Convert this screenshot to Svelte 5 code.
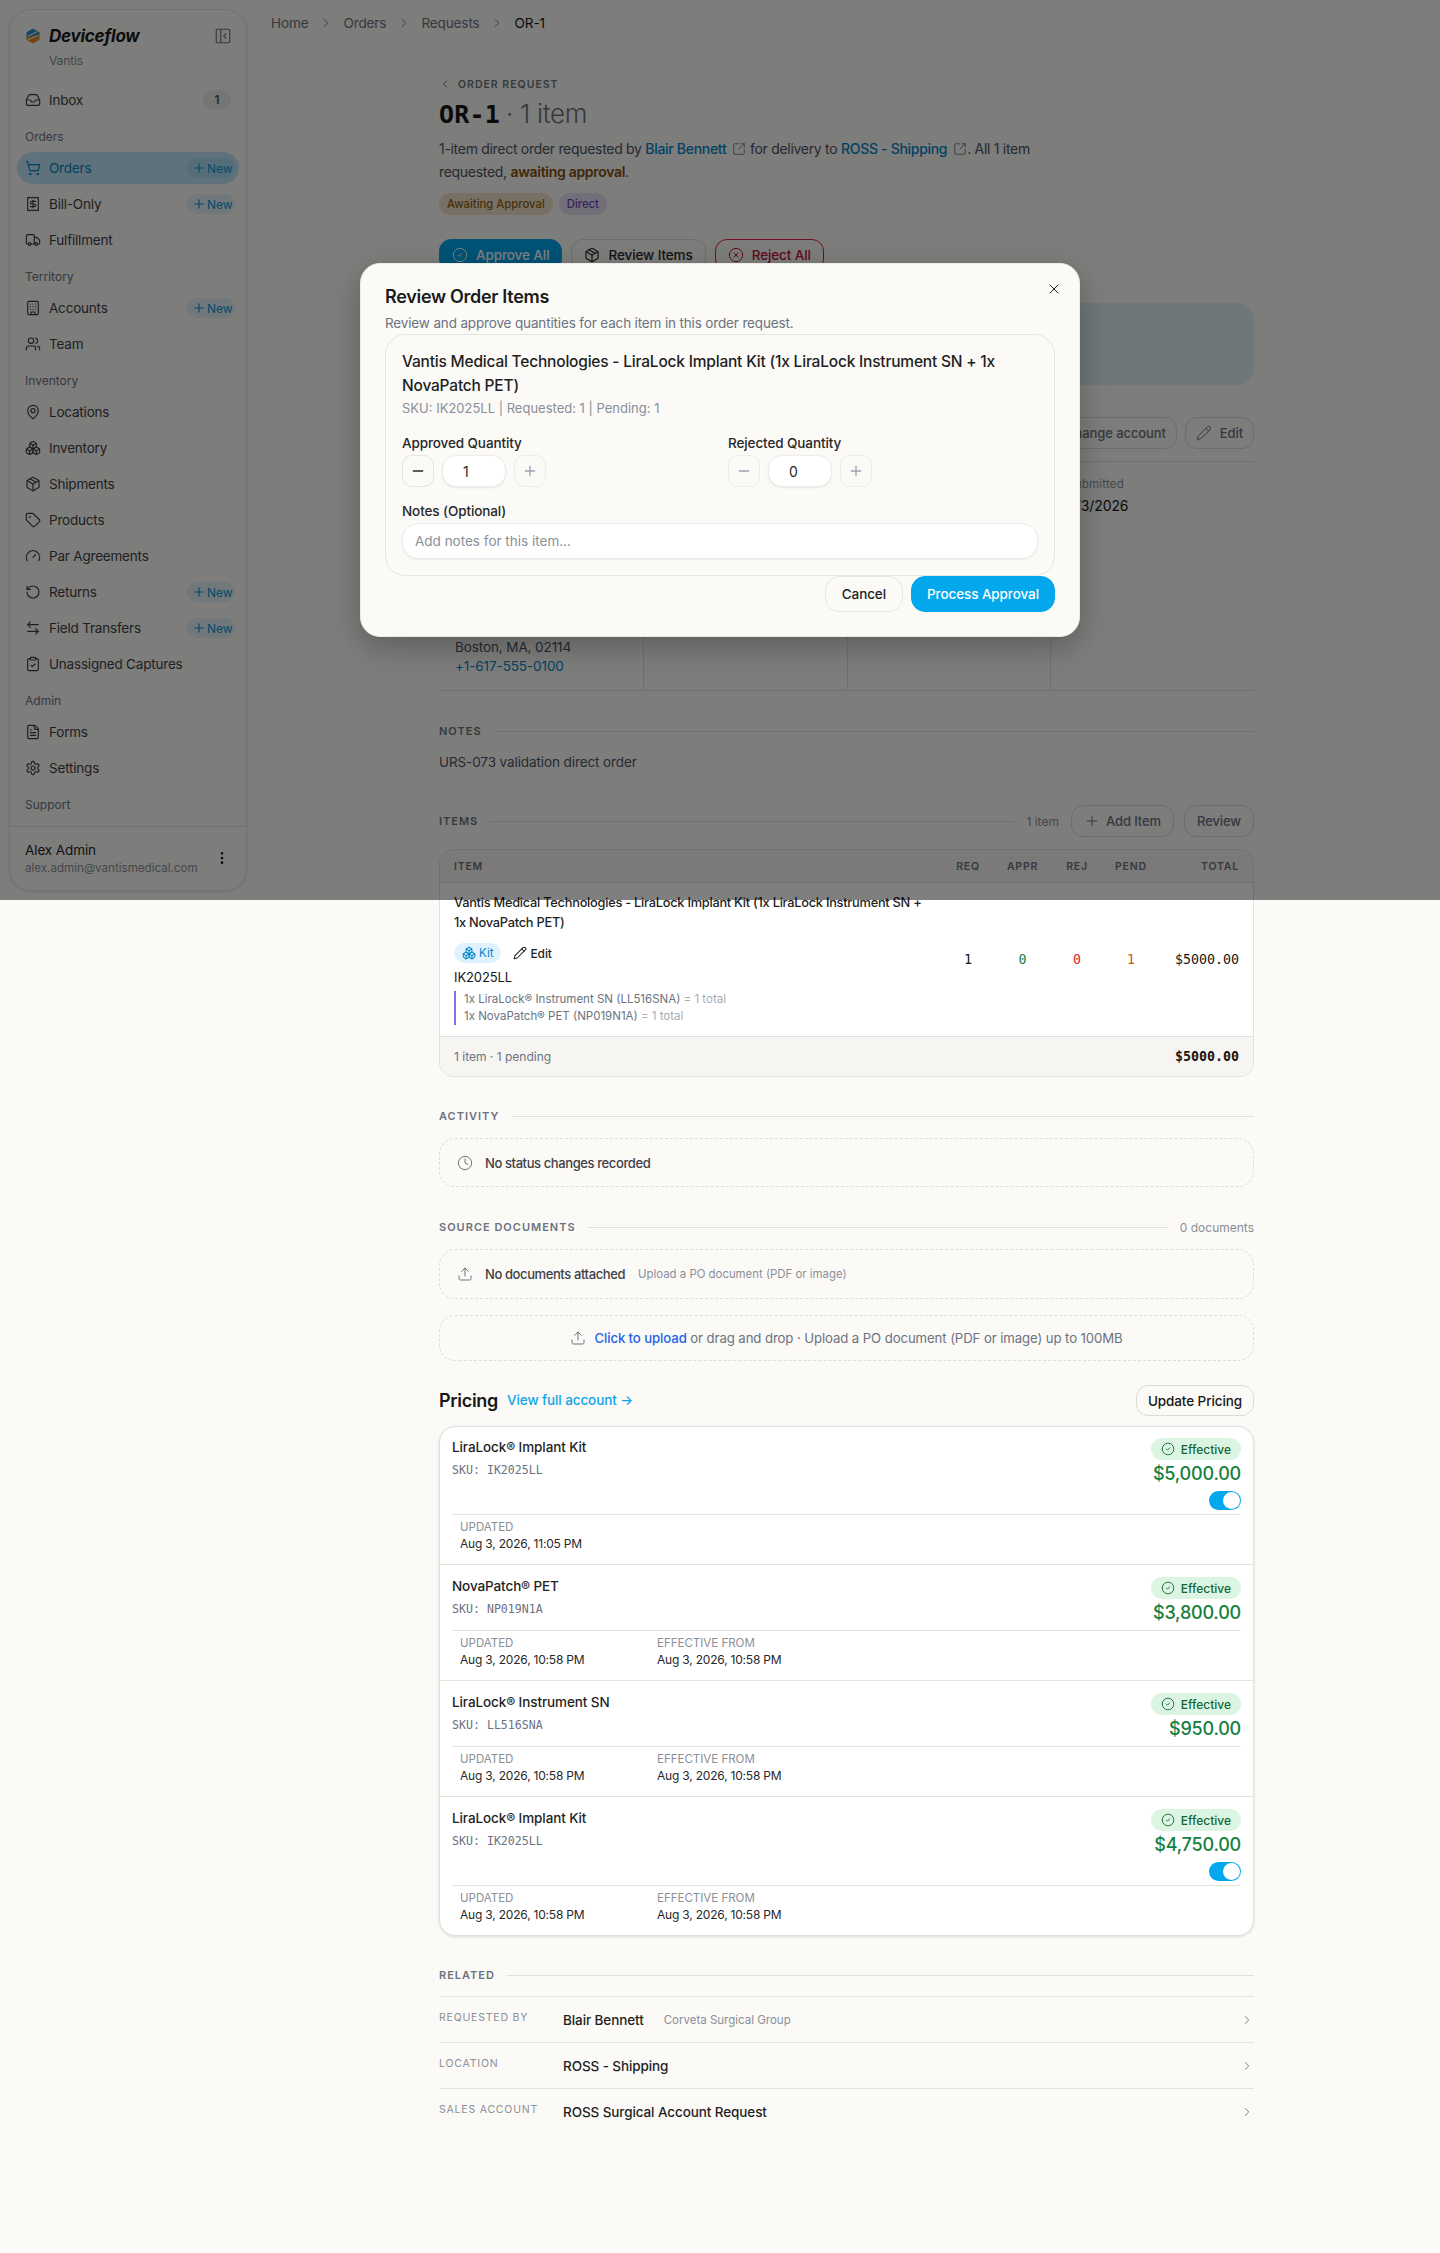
<script>
  const c = (x, y, r) => `M${x - r} ${y}a${r} ${r} 0 1 0 ${2 * r} 0a${r} ${r} 0 1 0 ${-2 * r} 0`;
  const rr = (x, y, w, h, r) =>
    `M${x + r} ${y}h${w - 2 * r}a${r} ${r} 0 0 1 ${r} ${r}v${h - 2 * r}a${r} ${r} 0 0 1 ${-r} ${r}h${-(w - 2 * r)}a${r} ${r} 0 0 1 ${-r} ${-r}v${-(h - 2 * r)}a${r} ${r} 0 0 1 ${r} ${-r}z`;

  const ICONS = {
    inbox: ['M22 12h-6l-2 3h-4l-2-3H2', 'M5.45 5.11 2 12v6a2 2 0 0 0 2 2h16a2 2 0 0 0 2-2v-6l-3.45-6.89A2 2 0 0 0 16.76 4H7.24a2 2 0 0 0-1.79 1.11z'],
    cart: [c(8, 21, 1), c(19, 21, 1), 'M2.05 2.05h2l2.66 12.42a2 2 0 0 0 2 1.58h9.78a2 2 0 0 0 1.95-1.57l1.65-7.43H5.12'],
    receipt: ['M4 2v20l2-1 2 1 2-1 2 1 2-1 2 1 2-1 2 1V2l-2 1-2-1-2 1-2-1-2 1-2-1-2 1Z', 'M16 8h-6a2 2 0 1 0 0 4h4a2 2 0 1 1 0 4H8', 'M12 17.5v-11'],
    truck: ['M14 18V6a2 2 0 0 0-2-2H4a2 2 0 0 0-2 2v11a1 1 0 0 0 1 1h2', 'M15 18H9', 'M19 18h2a1 1 0 0 0 1-1v-3.65a1 1 0 0 0-.22-.624l-3.48-4.35A1 1 0 0 0 17.52 8H14', c(17, 18, 2), c(7, 18, 2)],
    building: [rr(4, 2, 16, 20, 2), 'M9 22v-4h6v4', 'M8 6h.01', 'M16 6h.01', 'M12 6h.01', 'M12 10h.01', 'M12 14h.01', 'M16 10h.01', 'M16 14h.01', 'M8 10h.01', 'M8 14h.01'],
    users: ['M16 21v-2a4 4 0 0 0-4-4H6a4 4 0 0 0-4 4v2', c(9, 7, 4), 'M22 21v-2a4 4 0 0 0-3-3.87', 'M16 3.13a4 4 0 0 1 0 7.75'],
    pin: ['M20 10c0 6-8 12-8 12s-8-6-8-12a8 8 0 0 1 16 0Z', c(12, 10, 3)],
    boxes: ['M2.97 12.92A2 2 0 0 0 2 14.63v3.24a2 2 0 0 0 .97 1.71l3 1.8a2 2 0 0 0 2.06 0L12 19v-5.5l-5-3-4.03 2.42Z', 'm7 16.5-4.74-2.85', 'm7 16.5 5-3', 'M7 16.5v5.17', 'M12 13.5V19l3.97 2.38a2 2 0 0 0 2.06 0l3-1.8a2 2 0 0 0 .97-1.71v-3.24a2 2 0 0 0-.97-1.71L17 10.5l-5 3Z', 'm17 16.5-5-3', 'm17 16.5 4.74-2.85', 'M17 16.5v5.17', 'M7.97 4.42A2 2 0 0 0 7 6.13v4.37l5 3 5-3V6.13a2 2 0 0 0-.97-1.71l-3-1.8a2 2 0 0 0-2.06 0l-3 1.8Z', 'M12 8 7.26 5.15', 'm12 8 4.74-2.85', 'M12 13.5V8'],
    package: ['m7.5 4.27 9 5.15', 'M21 8a2 2 0 0 0-1-1.73l-7-4a2 2 0 0 0-2 0l-7 4A2 2 0 0 0 3 8v8a2 2 0 0 0 1 1.73l7 4a2 2 0 0 0 2 0l7-4A2 2 0 0 0 21 16Z', 'm3.3 7 8.7 5 8.7-5', 'M12 22V12'],
    tag: ['M12.586 2.586A2 2 0 0 0 11.172 2H4a2 2 0 0 0-2 2v7.172a2 2 0 0 0 .586 1.414l8.704 8.704a2.426 2.426 0 0 0 3.42 0l6.58-6.58a2.426 2.426 0 0 0 0-3.42z', c(7.5, 7.5, 0.5)],
    gauge: ['m12 14 4-4', 'M3.34 19a10 10 0 1 1 17.32 0'],
    rotate: ['M3 12a9 9 0 1 0 9-9 9.75 9.75 0 0 0-6.74 2.74L3 8', 'M3 3v5h5'],
    swap: ['M8 3 4 7l4 4', 'M4 7h16', 'm16 21 4-4-4-4', 'M20 17H4'],
    clipboard: [rr(8, 2, 8, 4, 1), 'M16 4h2a2 2 0 0 1 2 2v14a2 2 0 0 1-2 2H6a2 2 0 0 1-2-2V6a2 2 0 0 1 2-2h2', 'm9 14 2 2 4-4'],
    file: ['M15 2H6a2 2 0 0 0-2 2v16a2 2 0 0 0 2 2h12a2 2 0 0 0 2-2V7Z', 'M14 2v4a2 2 0 0 0 2 2h4', 'M10 9H8', 'M16 13H8', 'M16 17H8'],
    settings: ['M12.22 2h-.44a2 2 0 0 0-2 2v.18a2 2 0 0 1-1 1.73l-.43.25a2 2 0 0 1-2 0l-.15-.08a2 2 0 0 0-2.73.73l-.22.38a2 2 0 0 0 .73 2.73l.15.1a2 2 0 0 1 1 1.72v.51a2 2 0 0 1-1 1.74l-.15.09a2 2 0 0 0-.73 2.73l.22.38a2 2 0 0 0 2.73.73l.15-.08a2 2 0 0 1 2 0l.43.25a2 2 0 0 1 1 1.73V20a2 2 0 0 0 2 2h.44a2 2 0 0 0 2-2v-.18a2 2 0 0 1 1-1.73l.43-.25a2 2 0 0 1 2 0l.15.08a2 2 0 0 0 2.73-.73l.22-.39a2 2 0 0 0-.73-2.73l-.15-.08a2 2 0 0 1-1-1.74v-.5a2 2 0 0 1 1-1.74l.15-.09a2 2 0 0 0 .73-2.73l-.22-.38a2 2 0 0 0-2.73-.73l-.15.08a2 2 0 0 1-2 0l-.43-.25a2 2 0 0 1-1-1.73V4a2 2 0 0 0-2-2z', c(12, 12, 3)],
    panel: [rr(3, 3, 18, 18, 2), 'M9 3v18', 'm16 15-3-3 3-3'],
    plus: ['M5 12h14', 'M12 5v14'],
    minus: ['M5 12h14'],
    x: ['M18 6 6 18', 'm6 6 12 12'],
    right: ['m9 18 6-6-6-6'],
    left: ['m15 18-6-6 6-6'],
    ext: ['M21 13v6a2 2 0 0 1-2 2H5a2 2 0 0 1-2-2V5a2 2 0 0 1 2-2h6', 'm21 3-9 9', 'M15 3h6v6'],
    check: [c(12, 12, 10), 'm9 12 2 2 4-4'],
    xcircle: [c(12, 12, 10), 'm15 9-6 6', 'm9 9 6 6'],
    pencil: ['M21.174 6.812a1 1 0 0 0-3.986-3.987L3.842 16.174a2 2 0 0 0-.5.83l-1.321 4.352a.5.5 0 0 0 .623.622l4.353-1.32a2 2 0 0 0 .83-.497z', 'm15 5 4 4'],
    clock: [c(12, 12, 10), 'M12 6v6l4 2'],
    upload: ['M21 15v4a2 2 0 0 1-2 2H5a2 2 0 0 1-2-2v-4', 'M17 8l-5-5-5 5', 'M12 3v12'],
    kebab: [c(12, 5, 1), c(12, 12, 1), c(12, 19, 1)]
  };

  const nav = [
    { items: [{ label: 'Inbox', icon: 'inbox', badge: '1' }] },
    { title: 'Orders', items: [
      { label: 'Orders', icon: 'cart', isNew: true, active: true },
      { label: 'Bill-Only', icon: 'receipt', isNew: true },
      { label: 'Fulfillment', icon: 'truck' }
    ] },
    { title: 'Territory', items: [
      { label: 'Accounts', icon: 'building', isNew: true },
      { label: 'Team', icon: 'users' }
    ] },
    { title: 'Inventory', items: [
      { label: 'Locations', icon: 'pin' },
      { label: 'Inventory', icon: 'boxes' },
      { label: 'Shipments', icon: 'package' },
      { label: 'Products', icon: 'tag' },
      { label: 'Par Agreements', icon: 'gauge' },
      { label: 'Returns', icon: 'rotate', isNew: true },
      { label: 'Field Transfers', icon: 'swap', isNew: true },
      { label: 'Unassigned Captures', icon: 'clipboard' }
    ] },
    { title: 'Admin', items: [
      { label: 'Forms', icon: 'file' },
      { label: 'Settings', icon: 'settings' }
    ] },
    { title: 'Support', items: [] }
  ];

  const prices = [
    { name: 'LiraLock® Implant Kit', sku: 'IK2025LL', price: '$5,000.00', toggle: true, updated: 'Aug 3, 2026, 11:05 PM' },
    { name: 'NovaPatch® PET', sku: 'NP019N1A', price: '$3,800.00', updated: 'Aug 3, 2026, 10:58 PM', from: 'Aug 3, 2026, 10:58 PM' },
    { name: 'LiraLock® Instrument SN', sku: 'LL516SNA', price: '$950.00', updated: 'Aug 3, 2026, 10:58 PM', from: 'Aug 3, 2026, 10:58 PM' },
    { name: 'LiraLock® Implant Kit', sku: 'IK2025LL', price: '$4,750.00', toggle: true, updated: 'Aug 3, 2026, 10:58 PM', from: 'Aug 3, 2026, 10:58 PM' }
  ];

  const related = [
    { label: 'REQUESTED BY', value: 'Blair Bennett', sub: 'Corveta Surgical Group' },
    { label: 'LOCATION', value: 'ROSS - Shipping' },
    { label: 'SALES ACCOUNT', value: 'ROSS Surgical Account Request' }
  ];
</script>

{#snippet icon(name, size = 16, sw = 2)}
  <svg class="ic" width={size} height={size} viewBox="0 0 24 24" fill="none" stroke="currentColor" stroke-width={sw} stroke-linecap="round" stroke-linejoin="round" aria-hidden="true">
    {#each ICONS[name] as d}<path {d} />{/each}
  </svg>
{/snippet}

{#snippet rule(label, extra)}
  <div class="rule">
    <span class="rule-label">{label}</span>
    <span class="rule-line"></span>
    {#if extra}<span class="rule-extra">{extra}</span>{/if}
  </div>
{/snippet}

<div class="page">
  <aside class="side">
    <div class="brand">
      <div class="brand-row">
        <svg class="logo" width="16" height="16" viewBox="0 0 16 16" aria-hidden="true">
          <path d="M8 .5 14.5 4.2v3.2L1.5 10V4.2Z" fill="#2f8fc4" />
          <path d="M14.5 6.6v5.2L8 15.5 1.5 11.8V9.6Z" fill="#e08a1e" />
          <path d="M2.5 8.4 12.5 3.6M3 11.8 13.5 7.2" stroke="#fbfaf7" stroke-width="1" fill="none" />
        </svg>
        <span class="brand-name">Deviceflow</span>
        <span class="collapse">{@render icon('panel', 18, 1.5)}</span>
      </div>
      <div class="brand-sub">Vantis</div>
    </div>

    <nav class="nav">
      {#each nav as group}
        {#if group.title}<div class="nav-title">{group.title}</div>{/if}
        {#each group.items as item}
          <div class="nav-item" class:active={item.active}>
            {@render icon(item.icon, 16, 1.75)}
            <span class="nav-label">{item.label}</span>
            {#if item.badge}<span class="nav-badge">{item.badge}</span>{/if}
            {#if item.isNew}<span class="nav-new">{@render icon('plus', 14, 2)}New</span>{/if}
          </div>
        {/each}
      {/each}
    </nav>

    <div class="user">
      <div class="user-text">
        <div class="user-name">Alex Admin</div>
        <div class="user-mail">alex.admin@vantismedical.com</div>
      </div>
      <span class="kebab">{@render icon('kebab', 16, 2)}</span>
    </div>
  </aside>

  <main class="main">
    <div class="crumbs">
      <span>Home</span>{@render icon('right', 14, 1.5)}
      <span>Orders</span>{@render icon('right', 14, 1.5)}
      <span>Requests</span>{@render icon('right', 14, 1.5)}
      <span class="crumb-now">OR-1</span>
    </div>

    <div class="content">
      <div class="eyebrow">{@render icon('left', 12, 2)}<span>ORDER REQUEST</span></div>
      <h1 class="title"><span class="title-id">OR-1</span><span class="title-rest">· 1 item</span></h1>
      <p class="desc">1-item direct order requested by <a class="lnk">Blair Bennett</a><span class="ext">{@render icon('ext', 14, 1.5)}</span> for delivery to <a class="lnk">ROSS - Shipping</a><span class="ext">{@render icon('ext', 14, 1.5)}</span>. All 1 item<br />requested, <strong class="await">awaiting approval</strong>.</p>
      <div class="badges">
        <span class="badge amber">Awaiting Approval</span>
        <span class="badge purple">Direct</span>
      </div>
      <div class="actions">
        <button class="btn primary">{@render icon('check', 16, 1.5)}Approve All</button>
        <button class="btn">{@render icon('package', 16, 1.75)}Review Items</button>
        <button class="btn danger">{@render icon('xcircle', 16, 1.5)}Reject All</button>
      </div>

      <div class="callout"></div>

      <div class="detail-head">
        <button class="btn muted">Change account</button>
        <button class="btn muted">{@render icon('pencil', 16, 1.5)}Edit</button>
      </div>

      <div class="grid">
        <div class="cell">
          <div class="cell-foot">
            <div class="cell-muted">Boston, MA, 02114</div>
            <div class="cell-link">+1-617-555-0100</div>
          </div>
        </div>
        <div class="cell"></div>
        <div class="cell"></div>
        <div class="cell">
          <div class="cell-label">Submitted</div>
          <div class="cell-main">8/3/2026</div>
        </div>
      </div>

      <section class="notes">
        {@render rule('NOTES')}
        <p class="notes-text">URS-073 validation direct order</p>
      </section>

      <div class="items-head">
        <span class="rule-label">ITEMS</span>
        <span class="rule-line"></span>
        <span class="rule-extra">1 item</span>
        <button class="btn muted small">{@render icon('plus', 16, 1.5)}Add Item</button>
        <button class="btn muted small">Review</button>
      </div>

      <div class="table">
        <div class="thead">
          <span class="th-item">ITEM</span>
          <span>REQ</span><span>APPR</span><span>REJ</span><span>PEND</span><span class="th-total">TOTAL</span>
        </div>
        <div class="trow">
          <div class="td-item">
            <div class="item-name">Vantis Medical Technologies - LiraLock Implant Kit (1x LiraLock Instrument SN + 1x NovaPatch PET)</div>
            <div class="item-tags">
              <span class="kit">{@render icon('boxes', 14, 1.75)}Kit</span>
              <span class="item-edit">{@render icon('pencil', 14, 1.75)}Edit</span>
            </div>
            <div class="item-sku">IK2025LL</div>
            <div class="kit-list">
              <div>1x LiraLock® Instrument SN (LL516SNA) <span class="kit-total">= 1 total</span></div>
              <div>1x NovaPatch® PET (NP019N1A) <span class="kit-total">= 1 total</span></div>
            </div>
          </div>
          <span class="num">1</span>
          <span class="num green">0</span>
          <span class="num red">0</span>
          <span class="num orange">1</span>
          <span class="num total">$5000.00</span>
        </div>
        <div class="tfoot">
          <span>1 item · 1 pending</span>
          <span class="tfoot-total">$5000.00</span>
        </div>
      </div>

      <section class="activity">
        {@render rule('ACTIVITY')}
        <div class="dash dash-row">
          {@render icon('clock', 16, 1.5)}
          <span class="dash-strong">No status changes recorded</span>
        </div>
      </section>

      <section class="source">
        {@render rule('SOURCE DOCUMENTS', '0 documents')}
        <div class="dash dash-row docs">
          {@render icon('upload', 16, 1.5)}
          <span class="dash-strong">No documents attached</span>
          <span class="dash-sub">Upload a PO document (PDF or image)</span>
        </div>
        <div class="dash drop">
          {@render icon('upload', 16, 1.5)}
          <span><a class="upload-link">Click to upload</a> or drag and drop · Upload a PO document (PDF or image) up to 100MB</span>
        </div>
      </section>

      <div class="pricing-head">
        <h2 class="pricing-title">Pricing</h2>
        <a class="pricing-link">View full account →</a>
        <button class="btn update">Update Pricing</button>
      </div>

      <div class="price-card">
        {#each prices as p}
          <div class="price-row">
            <div class="price-top">
              <div class="price-id">
                <div class="price-name">{p.name}</div>
                <div class="price-sku">SKU: {p.sku}</div>
              </div>
              <div class="price-right">
                <span class="eff">{@render icon('check', 14, 1.5)}Effective</span>
                <span class="price-val">{p.price}</span>
                {#if p.toggle}<span class="toggle"><span class="knob"></span></span>{/if}
              </div>
            </div>
            <div class="price-meta">
              <div class="meta-col">
                <div class="meta-label">UPDATED</div>
                <div class="meta-val">{p.updated}</div>
              </div>
              {#if p.from}
                <div class="meta-col">
                  <div class="meta-label">EFFECTIVE FROM</div>
                  <div class="meta-val">{p.from}</div>
                </div>
              {/if}
            </div>
          </div>
        {/each}
      </div>

      <section class="related">
        {@render rule('RELATED')}
        <div class="rel-list">
          {#each related as r}
            <div class="rel-row">
              <span class="rel-label">{r.label}</span>
              <span class="rel-val">{r.value}</span>
              {#if r.sub}<span class="rel-sub">{r.sub}</span>{/if}
              <span class="rel-go">{@render icon('right', 14, 1.5)}</span>
            </div>
          {/each}
        </div>
      </section>
    </div>
  </main>

  <div class="overlay">
    <div class="modal" role="dialog" aria-label="Review Order Items">
      <button class="close" aria-label="Close">{@render icon('x', 16, 1.5)}</button>
      <h3 class="m-title">Review Order Items</h3>
      <p class="m-sub">Review and approve quantities for each item in this order request.</p>
      <div class="m-card">
        <div class="m-name">Vantis Medical Technologies - LiraLock Implant Kit (1x LiraLock Instrument SN + 1x NovaPatch PET)</div>
        <div class="m-sku">SKU: IK2025LL | Requested: 1 | Pending: 1</div>
        <div class="m-cols">
          <div>
            <div class="m-label">Approved Quantity</div>
            <div class="stepper">
              <button class="step">{@render icon('minus', 16, 2)}</button>
              <input class="qty" value="1" />
              <button class="step dim">{@render icon('plus', 16, 2)}</button>
            </div>
          </div>
          <div>
            <div class="m-label">Rejected Quantity</div>
            <div class="stepper">
              <button class="step dim">{@render icon('minus', 16, 2)}</button>
              <input class="qty" value="0" />
              <button class="step dim">{@render icon('plus', 16, 2)}</button>
            </div>
          </div>
        </div>
        <div class="m-label notes-label">Notes (Optional)</div>
        <input class="m-notes" placeholder="Add notes for this item..." />
      </div>
      <div class="m-foot">
        <button class="m-btn">Cancel</button>
        <button class="m-btn go">Process Approval</button>
      </div>
    </div>
  </div>
</div>

<style>
  :global(body) {
    margin: 0;
    background: #fbfaf7;
    font-family: Inter, "Noto Sans", sans-serif;
    color: #171717;
  }
  .ic { flex: none; display: block; }
  button, input { font-family: inherit; }
  a { color: inherit; }

  .page { position: relative; display: flex; min-height: 2253px; background: #fbfaf7; font-size: 14px; letter-spacing: -0.1px; }

  /* sidebar */
  .side {
    flex: none; width: 238px; height: 882px; margin: 9px 0 0 9px; box-sizing: border-box;
    border: 1px solid #e7e5e0; border-radius: 22px; background: #fbfaf7;
    box-shadow: 0 1px 3px rgba(0,0,0,.1);
    display: flex; flex-direction: column;
  }
  .brand { height: 74px; padding: 0 15px; box-sizing: border-box; }
  .brand-row { display: flex; align-items: center; height: 36px; padding-top: 8px; box-sizing: content-box; }
  .logo { margin-right: 8px; flex: none; }
  .brand-name { font-weight: 700; font-style: italic; font-size: 17px; letter-spacing: -0.25px; color: #1a1a1a; flex: 1; }
  .collapse { color: #6b7280; margin-right: -1px; }
  .brand-sub { font-size: 12px; color: #8a8f98; padding-left: 24px; margin-top: -1px; line-height: 16px; }

  .nav { padding: 0 7px; }
  .nav-title { height: 32px; line-height: 33px; padding-left: 8px; font-size: 12px; color: #6b7280; letter-spacing: 0; }
  .nav-item { height: 32px; margin-bottom: 4px; display: flex; align-items: center; gap: 8px; padding: 0 4px 0 8px; border-radius: 16px; color: #3f3f46; font-size: 13.5px; letter-spacing: -0.2px; }
  .nav-item.active { background: #bfe5f7; color: #0284c7; }
  .nav-label { flex: 1; }
  .nav-badge { width: 28px; height: 20px; margin-right: 4px; border-radius: 10px; background: #ebebe8; font-size: 12px; font-weight: 600; line-height: 20px; text-align: center; color: #4b5563; }
  .nav-new { width: 48px; height: 20px; box-sizing: border-box; padding-left: 5px; border-radius: 10px; display: flex; align-items: center; gap: 1px; background: #e1f0f6; color: #0c93cf; font-size: 12px; letter-spacing: 0; }
  .active .nav-new { background: #a9dcf3; }

  .user { margin-top: auto; height: 64px; box-sizing: border-box; border-top: 1px solid #e2e0dc; padding: 12px 15px 14px; display: flex; align-items: center; }
  .user-text { flex: 1; min-width: 0; }
  .user-name { font-size: 13.5px; line-height: 20px; color: #1f1f1f; }
  .user-mail { font-size: 11.6px; line-height: 16px; color: #8a8f98; white-space: nowrap; letter-spacing: 0; }
  .kebab { color: #171717; margin-right: 1px; }

  /* main */
  .main { flex: 1; min-width: 0; }
  .crumbs { display: flex; align-items: center; height: 18px; margin-top: 14px; margin-left: 24px; gap: 10.5px; font-size: 13.5px; color: #6b7280; }
  .crumb-now { color: #171717; }
  .content { width: 815px; margin-left: 192px; margin-top: 45px; }

  .eyebrow { display: flex; align-items: center; gap: 7px; height: 14px; font-size: 10.5px; font-weight: 600; letter-spacing: 1px; color: #6b7280; }
  .title { margin: 7px 0 0; height: 32px; line-height: 32px; font-size: 26px; font-weight: 300; letter-spacing: -0.3px; display: flex; align-items: baseline; gap: 6px; }
  .title-id { font-family: "DejaVu Sans Mono", monospace; font-weight: 700; font-size: 25px; letter-spacing: 0.2px; }
  .title-rest { color: #6b7280; white-space: nowrap; }
  .desc { margin: 7px 0 0; width: 620px; font-size: 14px; line-height: 23px; color: #4b5563; letter-spacing: -0.3px; }
  .lnk { color: #0284c7; font-weight: 450; }
  .ext { display: inline-block; vertical-align: -2px; margin: 0 0 0 6px; color: #6b7280; }
  .await { color: #854d0e; font-weight: 600; }
  .badges { display: flex; gap: 6px; margin-top: 10px; }
  .badge { height: 22px; line-height: 22px; padding: 0 8px; border-radius: 11px; font-size: 11.3px; font-weight: 500; letter-spacing: 0; }
  .amber { background: #efe3cb; color: #92600e; }
  .purple { background: #e4dff3; color: #6d3fc0; }
  .actions { display: flex; gap: 9px; margin-top: 24px; }

  .btn {
    height: 32px; padding: 0 12px; display: inline-flex; align-items: center; gap: 8px; box-sizing: border-box;
    border: 1px solid #dddbd6; border-radius: 12px; background: #fbfaf7; color: #27272a; font-size: 13.5px; font-weight: 450; letter-spacing: -0.1px; white-space: nowrap;
  }
  .primary { background: #02a7ec; border-color: #02a7ec; color: #fff; }
  .danger { border-color: #e11d48; color: #be123c; }
  .muted { color: #6b7280; font-size: 13px; }
  .callout { height: 82px; margin-top: 32px; border-radius: 16px; background: #e0eef2; }
  .detail-head { display: flex; justify-content: flex-end; gap: 8px; margin-top: 32px; }
  .detail-head .btn { padding: 0 10px; }

  .grid { margin-top: 12px; height: 230px; display: grid; grid-template-columns: repeat(4, 1fr); border-top: 1px solid #e2e0dc; border-bottom: 1px solid #e2e0dc; box-sizing: border-box; }
  .cell { padding: 14px 16px 0; border-left: 1px solid #e2e0dc; display: flex; flex-direction: column; }
  .cell:first-child { border-left: 0; }
  .cell-label { font-size: 11.5px; line-height: 16px; color: #8a8f98; letter-spacing: 0.2px; }
  .cell-main { margin-top: 4px; line-height: 20px; }
  .cell-foot { margin-top: auto; padding-bottom: 14px; line-height: 19px; font-size: 13.5px; }
  .cell-muted { color: #4b5563; }
  .cell-link { color: #0284c7; }

  .notes { margin-top: 33px; }
  .rule { display: flex; align-items: center; height: 14px; gap: 12px; }
  .rule-label { font-size: 11px; font-weight: 600; letter-spacing: 1px; color: #6b7280; white-space: nowrap; }
  .rule-line { flex: 1; height: 1px; background: #e2e0dc; }
  .rule-extra { font-size: 12px; color: #8a8f98; letter-spacing: 0; }
  .notes-text { margin: 14px 0 0; line-height: 20px; font-size: 13.5px; color: #4b5563; }

  .items-head { display: flex; align-items: center; gap: 12px; margin-top: 33px; }
  .btn.small { gap: 6px; padding: 0 12px; }
  .items-head .btn + .btn { margin-left: -2px; }
  .table { margin-top: 12px; border: 1px solid #e2e0dc; border-radius: 14px; overflow: hidden; background: #fff; }
  .thead, .trow { display: grid; grid-template-columns: 1fr 54px 55px 54px 54px 81px; padding: 0 14px; align-items: center; }
  .thead { height: 33px; box-sizing: border-box; background: #f6f5f2; border-bottom: 1px solid #e2e0dc; font-size: 10.5px; font-weight: 600; letter-spacing: 0.8px; color: #6b7280; text-align: center; }
  .th-item { text-align: left; }
  .th-total { text-align: right; }
  .trow { height: 153px; box-sizing: border-box; }
  .td-item { align-self: start; padding-top: 10px; padding-right: 16px; }
  .item-name { font-size: 12.8px; line-height: 20px; font-weight: 450; color: #1f1f1f; letter-spacing: -0.25px; }
  .item-tags { display: flex; align-items: center; gap: 12px; margin-top: 10px; height: 20px; }
  .kit { height: 20px; display: inline-flex; align-items: center; gap: 3px; padding: 0 8px; border-radius: 10px; background: #e0f2fe; color: #0284c7; font-size: 11.5px; letter-spacing: 0; }
  .item-edit { display: inline-flex; align-items: center; gap: 3px; font-size: 12px; color: #1f1f1f; font-weight: 450; }
  .item-sku { margin-top: 5px; line-height: 18px; font-size: 13px; }
  .kit-list { margin-top: 5px; height: 34px; border-left: 2px solid #8b6fe8; padding-left: 8px; font-size: 11.5px; line-height: 17px; color: #6b7280; white-space: nowrap; letter-spacing: 0; }
  .kit-total { color: #a8abb2; }
  .num { font-family: "DejaVu Sans Mono", monospace; font-size: 13.3px; text-align: center; letter-spacing: 0; }
  .green { color: #15803d; }
  .red { color: #dc2626; }
  .orange { color: #c2620e; }
  .total { text-align: right; }
  .tfoot { height: 40px; box-sizing: border-box; display: flex; align-items: center; justify-content: space-between; padding: 0 14px; background: #f6f5f2; border-top: 1px solid #e2e0dc; font-size: 12px; color: #6b7280; letter-spacing: 0; }
  .tfoot-total { font-family: "DejaVu Sans Mono", monospace; font-weight: 700; font-size: 13.3px; color: #171717; }

  .activity { margin-top: 32px; }
  .dash { border: 1px dashed #dfddd8; border-radius: 16px; box-sizing: border-box; color: #6b7280; }
  .dash-row { display: flex; align-items: center; padding: 0 17px; }
  .activity .dash { height: 49px; margin-top: 15px; gap: 12px; }
  .dash-strong { font-size: 13px; font-weight: 450; color: #3f3f46; letter-spacing: -0.4px; }
  .source { margin-top: 33px; }
  .docs { height: 50px; margin-top: 15px; gap: 12px; }
  .docs .dash-strong { margin-right: 1px; }
  .dash-sub { font-size: 11.4px; color: #8a8f98; letter-spacing: 0; }
  .drop { height: 46px; margin-top: 16px; display: flex; align-items: center; justify-content: center; gap: 8px; font-size: 13.2px; color: #6b7280; }
  .upload-link { color: #2563eb; font-weight: 450; }

  .pricing-head { display: flex; align-items: center; margin-top: 24px; height: 31px; }
  .pricing-title { margin: 0 9px 0 0; font-size: 18px; font-weight: 600; color: #171717; letter-spacing: -0.3px; }
  .pricing-link { color: #0ea5e9; font-size: 13.5px; font-weight: 450; margin-top: -2px; }
  .update { margin-left: auto; height: 31px; padding: 0 11px; color: #171717; }

  .price-card { margin-top: 10px; background: #fff; border: 1px solid #e2e0dc; border-radius: 16px; box-shadow: 0 1px 3px rgba(0,0,0,.12); overflow: hidden; }
  .price-row { padding: 12px 12px 12px; border-top: 1px solid #e5e3df; box-sizing: border-box; }
  .price-row:first-child { border-top: 0; padding-top: 11px; }
  .price-top { display: flex; justify-content: space-between; border-bottom: 1px solid #e5e3df; padding-bottom: 6px; }
  .price-name { font-size: 13.5px; line-height: 20px; font-weight: 450; color: #1f1f1f; margin-top: -1px; }
  .price-sku { font-family: "DejaVu Sans Mono", monospace; font-size: 11.6px; line-height: 16px; color: #6b7280; margin-top: 5px; letter-spacing: 0; }
  .price-right { display: flex; flex-direction: column; align-items: flex-end; }
  .eff { height: 22px; display: inline-flex; align-items: center; gap: 6px; padding: 0 10px; border-radius: 11px; background: #dcf5e3; color: #166534; font-size: 12px; font-weight: 500; letter-spacing: 0; }
  .price-val { height: 25px; line-height: 28px; font-size: 18px; font-weight: 500; color: #15803d; letter-spacing: -0.2px; }
  .toggle { width: 32px; height: 19px; margin: 6px 0 -2px; border-radius: 10px; background: #02a7ec; position: relative; display: block; box-sizing: border-box; }
  .knob { position: absolute; right: 1px; top: 1px; width: 17px; height: 17px; border-radius: 50%; background: #fff; }
  .price-meta { display: flex; padding: 5px 8px 0; }
  .meta-col { width: 197px; }
  .meta-label { font-size: 11.5px; line-height: 14px; color: #8a8f98; letter-spacing: 0; }
  .meta-val { margin-top: 2px; font-size: 12px; line-height: 16px; color: #27272a; letter-spacing: -0.2px; white-space: nowrap; }

  .related { margin-top: 32px; }
  .rel-list { margin-top: 14px; }
  .rel-row { height: 46px; border-top: 1px solid #e5e3df; display: flex; align-items: center; box-sizing: border-box; }
  .rel-label { width: 124px; flex: none; font-size: 10.5px; letter-spacing: 0.8px; color: #8a8f98; margin-top: -4px; white-space: nowrap; }
  .rel-val { font-size: 13.5px; font-weight: 450; color: #1f1f1f; }
  .rel-sub { margin-left: 20px; font-size: 11.5px; color: #8a8f98; letter-spacing: 0; }
  .rel-go { margin-left: auto; color: #6b7280; padding-right: 0; }

  /* overlay */
  .overlay { position: absolute; left: 0; top: 0; right: 0; height: 900px; background: rgba(0,0,0,.5); display: flex; align-items: center; justify-content: center; }
  .modal {
    position: relative; width: 720px; height: 374px; box-sizing: border-box; padding: 19px 24px 0; background: #fbfaf7;
    border: 1px solid #ecebe6; border-radius: 20px; box-shadow: 0 10px 30px rgba(0,0,0,.25);
  }
  .close { position: absolute; right: 16px; top: 16px; width: 18px; height: 18px; padding: 0; border: 0; background: none; color: #27272a; display: flex; align-items: center; justify-content: center; }
  .m-title { margin: 0; font-size: 18px; line-height: 28px; font-weight: 600; color: #1a1a1a; letter-spacing: -0.3px; }
  .m-sub { margin: 2px 0 0; font-size: 13.5px; line-height: 20px; color: #6b7280; letter-spacing: -0.15px; }
  .m-card { margin-top: 1px; height: 242px; box-sizing: border-box; border: 1px solid #e7e5e0; border-radius: 20px; padding: 15px 16px 0; }
  .m-name { font-size: 15.5px; line-height: 24px; font-weight: 450; color: #1f1f1f; letter-spacing: -0.2px; }
  .m-sku { font-size: 13px; line-height: 18px; color: #8a8f98; margin-top: 1px; letter-spacing: 0; }
  .m-cols { display: grid; grid-template-columns: 1fr 1fr; gap: 16px; margin-top: 17px; }
  .m-label { font-size: 13.5px; line-height: 18px; font-weight: 450; color: #27272a; }
  .stepper { display: flex; gap: 8px; margin-top: 3px; align-items: center; }
  .step { width: 32px; height: 32px; padding: 0; box-sizing: border-box; border: 1px solid #e5e3df; border-radius: 10px; background: transparent; color: #27272a; display: flex; align-items: center; justify-content: center; }
  .step.dim { color: #9ca3af; border-color: #eeece8; }
  .qty { width: 64px; height: 32px; box-sizing: border-box; padding: 0 0 0 20px; border: 1px solid #eeece8; border-radius: 14px; background: #fff; font-size: 14px; color: #27272a; outline: none; box-shadow: 0 1px 2px rgba(0,0,0,.08); }
  .notes-label { margin-top: 15px; }
  .m-notes { display: block; width: 100%; height: 36px; margin-top: 3px; box-sizing: border-box; padding: 0 12px; border: 1px solid #eeece8; border-radius: 16px; background: #fff; font-size: 13.5px; outline: none; box-shadow: 0 1px 2px rgba(0,0,0,.06); }
  .m-notes::placeholder { color: #8a8f98; }
  .m-foot { display: flex; justify-content: flex-end; gap: 8px; }
  .m-btn { height: 36px; padding: 0 16px; box-sizing: border-box; border: 1px solid #e7e5e0; border-radius: 14px; background: #fbfaf7; color: #1f1f1f; font-size: 13.5px; font-weight: 450; letter-spacing: -0.1px; }
  .m-btn.go { width: 144px; padding: 0; background: #02a7ec; border-color: #02a7ec; color: #fff; }
</style>
